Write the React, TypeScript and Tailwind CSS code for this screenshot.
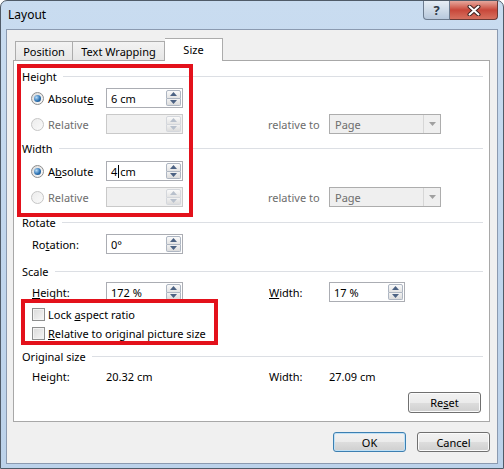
import React from 'react';

function Arrow({ up, muted }: { up?: boolean; muted?: boolean }) {
  return (
    <svg width="7" height="4" viewBox="0 0 7 4">
      <polygon points={up ? '0,4 7,4 3.5,0' : '0,0 7,0 3.5,4'} fill={muted ? '#b8c0cc' : '#4c6283'} />
    </svg>
  );
}

function Spinner({ muted }: { muted?: boolean }) {
  return (
    <div className="flex flex-col w-[15px] h-[16px]">
      <div className={`flex-1 flex items-center justify-center rounded-t-[2px] border ${muted ? 'border-[#d4d7dc]' : 'border-[#aeb6c2]'} bg-gradient-to-b from-[#fafafa] to-[#e4e4e4]`}>
        <Arrow up muted={muted} />
      </div>
      <div className={`flex-1 flex items-center justify-center rounded-b-[2px] border border-t-0 ${muted ? 'border-[#d4d7dc]' : 'border-[#aeb6c2]'} bg-gradient-to-b from-[#f2f2f2] to-[#dcdcdc]`}>
        <Arrow muted={muted} />
      </div>
    </div>
  );
}

function SpinBox({ children, disabled, className }: { children?: React.ReactNode; disabled?: boolean; className: string }) {
  return (
    <div
      className={`flex items-center h-[20px] pl-[4px] pr-[1px] border ${
        disabled ? 'border-[#c9c9c9] bg-[#f0f0f0]' : 'border-[#abadb3] bg-white'
      } ${className}`}
    >
      <div className="flex-1 flex items-center">{children}</div>
      <Spinner muted={disabled} />
    </div>
  );
}

function Radio({ checked, disabled }: { checked?: boolean; disabled?: boolean }) {
  if (checked) {
    return (
      <span className="w-[13px] h-[13px] rounded-full border border-[#8d8d8d] bg-gradient-to-br from-[#dcdcdc] to-[#fbfbfb] flex items-center justify-center shrink-0">
        <span className="w-[7px] h-[7px] rounded-full bg-[radial-gradient(circle_at_35%_35%,#b9dcf7,#2d73b4_55%,#163f6c)]" />
      </span>
    );
  }
  return (
    <span
      className={`w-[13px] h-[13px] rounded-full border shrink-0 ${
        disabled ? 'border-[#c6c6c6] bg-gradient-to-br from-[#ececec] to-[#fafafa]' : 'border-[#8d8d8d] bg-white'
      }`}
    />
  );
}

function Checkbox() {
  return (
    <span className="w-[13px] h-[13px] border border-[#8e8f8f] bg-gradient-to-br from-[#dadada] to-[#f6f6f6] shadow-[inset_0_0_0_1px_#f3f3f3] shrink-0" />
  );
}

function Section({ title, className }: { title: string; className: string }) {
  return (
    <div className={`flex items-center h-[20px] pl-[8px] pr-[6px] ${className}`}>
      <span>{title}</span>
      <div className="flex-1 h-px bg-[#dcdfe4] ml-[6px]" />
    </div>
  );
}

function PageSelect() {
  return (
    <div className="flex items-center w-[112px] h-[20px] border border-[#adadad] bg-[#efefef] text-[#6d6d6d]">
      <span className="flex-1 pl-[5px]">Page</span>
      <div className="w-[17px] h-full border-l border-[#d6d6d6] flex items-center justify-center">
        <svg width="7" height="4" viewBox="0 0 7 4">
          <polygon points="0,0 7,0 3.5,4" fill="#a0a0a0" />
        </svg>
      </div>
    </div>
  );
}

function DialogButton({ children, primary, className }: { children: React.ReactNode; primary?: boolean; className?: string }) {
  return (
    <button
      className={`w-[73px] rounded-[3px] border ${
        primary ? 'border-[#3c7fb1] shadow-[inset_0_0_0_1px_#bfe0f5]' : 'border-[#707070] shadow-[inset_0_0_0_1px_#fbfbfb]'
      } bg-[linear-gradient(#f2f2f2_0%,#ebebeb_50%,#dddddd_51%,#cfcfcf_100%)] text-black ${className ?? ''}`}
    >
      {children}
    </button>
  );
}

export default function App() {
  return (
    <div className="w-[504px] h-[469px] relative text-[11px] text-black font-['Noto_Sans',sans-serif] leading-none">
      <div className="w-full h-full flex flex-col rounded-t-[7px] border border-[#505b68] bg-gradient-to-b from-[#c9dcf0] via-[#c1d6ed] to-[#bcd2ea] px-[5px] pb-[4px]">
        {/* title bar */}
        <div className="h-[28px] flex items-start">
          <span className="self-center pl-[2px] text-[12px]">Layout</span>
          <div className="ml-auto flex">
            <div className="w-[27px] h-[19px] flex items-center justify-center rounded-bl-[4px] border border-t-0 border-[#6c7b8e] bg-gradient-to-b from-[#e6edf5] via-[#cfdbe8] to-[#b7c8dc] text-[13px] font-bold text-[#2f3a48]">
              ?
            </div>
            <div className="w-[48px] h-[19px] flex items-center justify-center rounded-br-[4px] border border-t-0 border-l-0 border-[#6b3a36] bg-gradient-to-b from-[#e5a79d] via-[#c8473a] to-[#d6705f]">
              <svg width="14" height="11" viewBox="0 0 14 11">
                <path d="M2.5 1.5 L11.5 9.5 M11.5 1.5 L2.5 9.5" stroke="#3b2220" strokeWidth="4" strokeLinecap="round" />
                <path d="M2.5 1.5 L11.5 9.5 M11.5 1.5 L2.5 9.5" stroke="#ffffff" strokeWidth="2" strokeLinecap="round" />
              </svg>
            </div>
          </div>
        </div>

        {/* client area */}
        <div className="flex-1 flex flex-col border border-[#8b9ab0] bg-[#f0f0f0] px-[6px] pr-[7px]">
          {/* tabs */}
          <div className="mt-[8px] h-[23px] -mb-px flex items-end pl-[2px] relative z-10">
            <div className="w-[58px] h-[19px] mb-px flex items-center justify-center border border-b-0 border-[#acacac] bg-gradient-to-b from-[#f3f3f3] to-[#e6e6e6]">
              Position
            </div>
            <div className="w-[92px] h-[19px] mb-px flex items-center justify-center border border-b-0 border-l-0 border-[#acacac] bg-gradient-to-b from-[#f3f3f3] to-[#e6e6e6]">
              Text Wrapping
            </div>
            <div className="w-[58px] h-[23px] flex items-center justify-center border border-b-0 border-l-0 border-[#acacac] bg-white pb-[2px]">
              Size
            </div>
          </div>

          {/* panel */}
          <div className="h-[362px] border border-[#a8a8a8] bg-white flex flex-col">
            <Section title="Height" className="mt-[5px]" />
            <div className="mt-[2px] h-[20px] flex items-center pl-[17px]">
              <div className="w-[75px] flex items-center gap-[4px]">
                <Radio checked />
                <span>
                  Absolut<u>e</u>
                </span>
              </div>
              <SpinBox className="w-[77px]">6 cm</SpinBox>
            </div>
            <div className="mt-[6px] h-[20px] flex items-center pl-[17px]">
              <div className="w-[75px] flex items-center gap-[4px] text-[#6d6d6d]">
                <Radio disabled />
                <span>Relative</span>
              </div>
              <SpinBox className="w-[77px]" disabled />
              <span className="ml-[85px] w-[61px] text-[#6d6d6d]">relative to</span>
              <PageSelect />
            </div>

            <Section title="Width" className="mt-[4px]" />
            <div className="mt-[3px] h-[20px] flex items-center pl-[17px]">
              <div className="w-[75px] flex items-center gap-[4px]">
                <Radio checked />
                <span>
                  A<u>b</u>solute
                </span>
              </div>
              <SpinBox className="w-[77px]">
                <span>4</span>
                <span className="inline-block w-px h-[13px] bg-black mx-[1px]" />
                <span>cm</span>
              </SpinBox>
            </div>
            <div className="mt-[6px] h-[20px] flex items-center pl-[17px]">
              <div className="w-[75px] flex items-center gap-[4px] text-[#6d6d6d]">
                <Radio disabled />
                <span>Relative</span>
              </div>
              <SpinBox className="w-[77px]" disabled />
              <span className="ml-[85px] w-[61px] text-[#6d6d6d]">relative to</span>
              <PageSelect />
            </div>

            <Section title="Rotate" className="mt-[5px]" />
            <div className="mt-[2px] h-[20px] flex items-center pl-[18px]">
              <span className="w-[74px]">
                Ro<u>t</u>ation:
              </span>
              <SpinBox className="w-[77px]">0°</SpinBox>
            </div>

            <Section title="Scale" className="mt-[7px]" />
            <div className="mt-[1px] h-[20px] flex items-center pl-[18px]">
              <span className="w-[74px]">
                <u>H</u>eight:
              </span>
              <SpinBox className="w-[77px]">172 %</SpinBox>
              <span className="ml-[86px] w-[60px]">
                <u>W</u>idth:
              </span>
              <SpinBox className="w-[76px]">17 %</SpinBox>
            </div>
            <div className="mt-[3px] h-[18px] flex items-center pl-[18px] gap-[3px]">
              <Checkbox />
              <span>
                Lock <u>a</u>spect ratio
              </span>
            </div>
            <div className="mt-[1px] h-[18px] flex items-center pl-[18px] gap-[3px]">
              <Checkbox />
              <span>
                <u>R</u>elative to original picture size
              </span>
            </div>

            <Section title="Original size" className="mt-[4px]" />
            <div className="h-[20px] flex items-center pl-[18px]">
              <span className="w-[74px]">Height:</span>
              <span className="w-[77px]">20.32 cm</span>
              <span className="ml-[86px] w-[60px]">Width:</span>
              <span>27.09 cm</span>
            </div>
            <div className="mt-[6px] flex justify-end pr-[8px]">
              <DialogButton className="h-[21px]">
                Re<u>s</u>et
              </DialogButton>
            </div>
          </div>

          {/* dialog buttons */}
          <div className="mt-[10px] flex justify-end gap-[11px]">
            <DialogButton primary className="h-[20px]">
              OK
            </DialogButton>
            <DialogButton className="h-[20px]">Cancel</DialogButton>
          </div>
        </div>
      </div>

      {/* red annotation boxes */}
      <div className="absolute left-[17px] top-[64px] w-[176px] h-[153px] border-4 border-[#e3111b] pointer-events-none" />
      <div className="absolute left-[21px] top-[299px] w-[197px] h-[46px] border-4 border-[#e3111b] pointer-events-none" />
    </div>
  );
}
